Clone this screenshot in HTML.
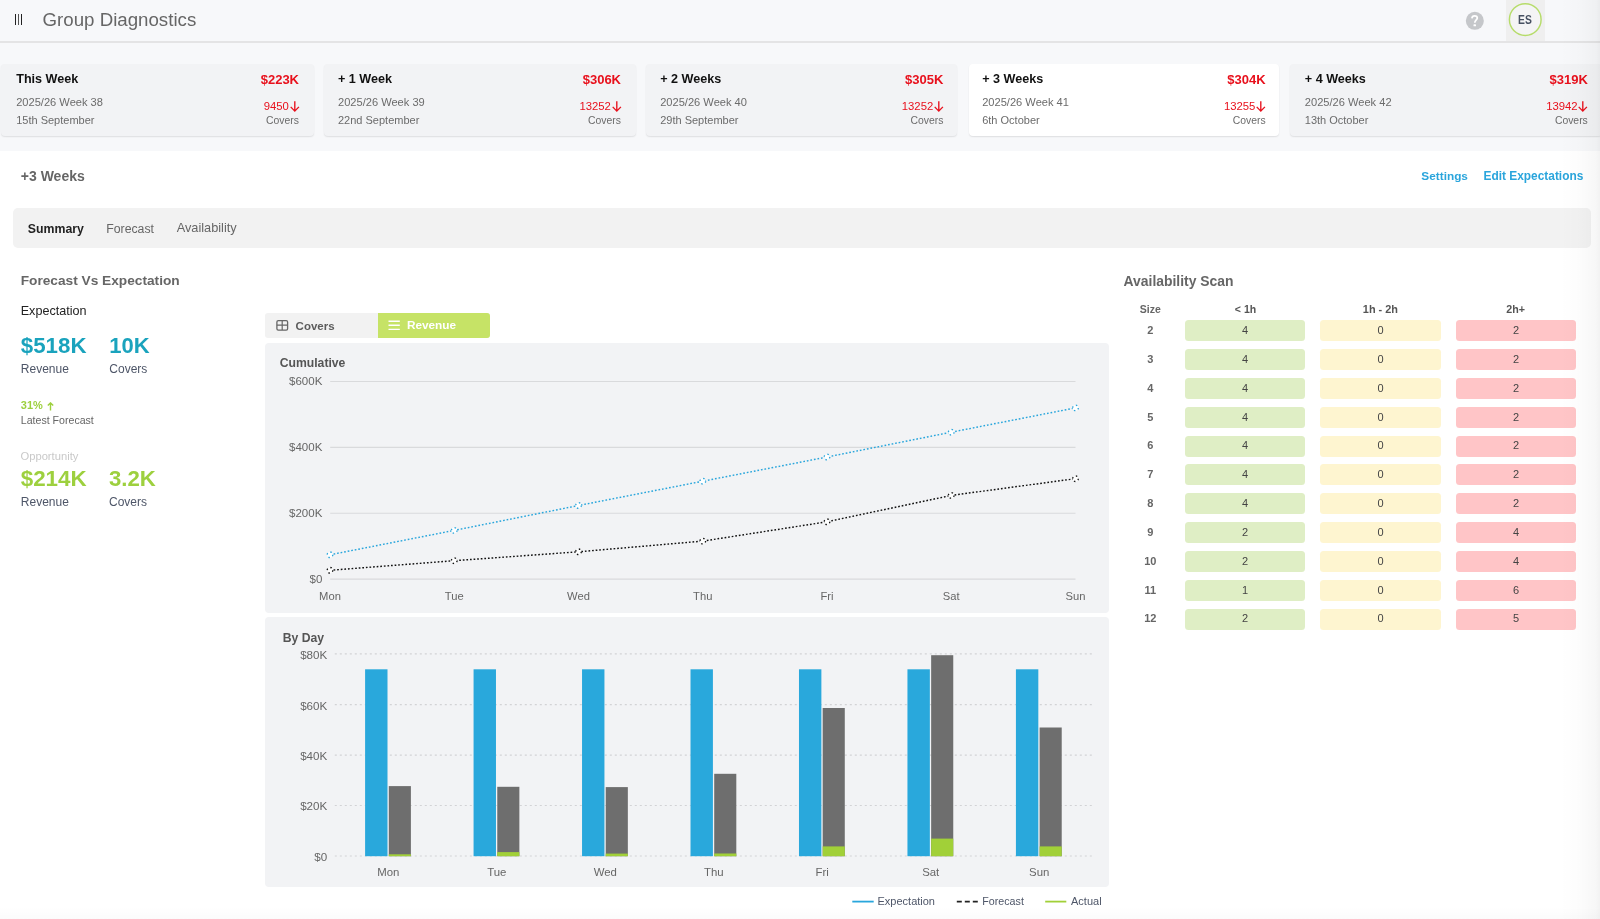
<!DOCTYPE html>
<html><head><meta charset="utf-8"><title>Group Diagnostics</title>
<style>
html,body{margin:0;padding:0;width:1600px;height:919px;overflow:hidden;background:#fff;font-family:"Liberation Sans", sans-serif;}
#root{position:relative;will-change:transform;width:1600px;height:919px;overflow:hidden;}
</style></head><body><div id="root">
<div style="position:absolute;left:0px;top:0px;width:1600px;height:41px;background:#f7f8fa;border-radius:0px;"></div>
<div style="position:absolute;left:0px;top:41px;width:1600px;height:2px;background:#e4e4e5;border-radius:0px;"></div>
<div style="position:absolute;left:14.5px;top:14px;width:1.4px;height:11px;background:#222;border-radius:0px;"></div>
<div style="position:absolute;left:17.5px;top:14px;width:1.4px;height:11px;background:#555;border-radius:0px;"></div>
<div style="position:absolute;left:20.5px;top:14px;width:1.4px;height:11px;background:#222;border-radius:0px;"></div>
<div style="position:absolute;top:10.87px;font-size:18.7px;line-height:18.7px;color:#666;font-weight:400;white-space:nowrap;left:42.5px;">Group Diagnostics</div>
<svg style="position:absolute;left:1465px;top:11px" width="20" height="20" viewBox="0 0 20 20"><circle cx="9.85" cy="9.8" r="9" fill="#c5c7ca"/><path d="M6.9 7.4 C7.0 5.6 8.2 4.8 9.6 4.8 C11.2 4.8 12.3 5.8 12.3 7.0 C12.3 8.8 9.8 9.0 9.8 11.7" stroke="#fff" stroke-width="1.7" fill="none"/><rect x="8.5" y="13.3" width="2.5" height="2.0" rx="0.4" fill="#fff"/></svg>
<div style="position:absolute;left:1505.5px;top:0px;width:39.5px;height:41px;background:#efefef;border-radius:0px;"></div>
<svg style="position:absolute;left:1505px;top:0px" width="40" height="40" viewBox="0 0 40 40"><circle cx="20.25" cy="19.55" r="15.85" fill="#f4f4f5" stroke="#b6dc6a" stroke-width="1.45"/></svg>
<div style="position:absolute;top:14.29px;font-size:12.3px;line-height:12.3px;color:#465061;font-weight:700;white-space:nowrap;transform:scaleX(0.84);left:1375.45px;width:300px;text-align:center;">ES</div>
<div style="position:absolute;left:0px;top:43px;width:1600px;height:107.5px;background:#f7f8fa;border-radius:0px;"></div>
<div style="position:absolute;left:1px;top:64px;width:313.2px;height:72px;background:#f2f3f5;border-radius:4px;box-shadow:0 1px 1.5px rgba(0,0,0,0.10);"></div>
<div style="position:absolute;top:73.13px;font-size:12.6px;line-height:12.6px;color:#111;font-weight:700;white-space:nowrap;left:16.2px;">This Week</div>
<div style="position:absolute;top:72.50px;font-size:13px;line-height:13px;color:#e8101c;font-weight:700;white-space:nowrap;right:1301.00px;">$223K</div>
<div style="position:absolute;top:96.60px;font-size:11.1px;line-height:11.1px;color:#6b6b6b;font-weight:400;white-space:nowrap;left:16.2px;">2025/26 Week 38</div>
<div style="position:absolute;top:114.89px;font-size:11px;line-height:11px;color:#6b6b6b;font-weight:400;white-space:nowrap;left:16.2px;">15th September</div>
<div style="position:absolute;top:101.03px;font-size:11.3px;line-height:11.3px;color:#e8101c;font-weight:400;white-space:nowrap;right:1311.20px;">9450</div>
<svg style="position:absolute;left:289.50px;top:100.5px" width="10" height="12" viewBox="0 0 10 12"><path d="M4.8 0.2 V10.2 M0.7 5.9 L4.8 10.1 L8.9 5.9" stroke="#e8101c" stroke-width="1.35" fill="none"/></svg>
<div style="position:absolute;top:115.60px;font-size:10.4px;line-height:10.4px;color:#6b6b6b;font-weight:400;white-space:nowrap;right:1301.00px;">Covers</div>
<div style="position:absolute;left:323.5px;top:64px;width:312px;height:72px;background:#f2f3f5;border-radius:4px;box-shadow:0 1px 1.5px rgba(0,0,0,0.10);"></div>
<div style="position:absolute;top:73.13px;font-size:12.6px;line-height:12.6px;color:#111;font-weight:700;white-space:nowrap;left:338.0px;">+ 1 Week</div>
<div style="position:absolute;top:72.50px;font-size:13px;line-height:13px;color:#e8101c;font-weight:700;white-space:nowrap;right:979.00px;">$306K</div>
<div style="position:absolute;top:96.60px;font-size:11.1px;line-height:11.1px;color:#6b6b6b;font-weight:400;white-space:nowrap;left:338.0px;">2025/26 Week 39</div>
<div style="position:absolute;top:114.89px;font-size:11px;line-height:11px;color:#6b6b6b;font-weight:400;white-space:nowrap;left:338.0px;">22nd September</div>
<div style="position:absolute;top:101.03px;font-size:11.3px;line-height:11.3px;color:#e8101c;font-weight:400;white-space:nowrap;right:989.20px;">13252</div>
<svg style="position:absolute;left:611.50px;top:100.5px" width="10" height="12" viewBox="0 0 10 12"><path d="M4.8 0.2 V10.2 M0.7 5.9 L4.8 10.1 L8.9 5.9" stroke="#e8101c" stroke-width="1.35" fill="none"/></svg>
<div style="position:absolute;top:115.60px;font-size:10.4px;line-height:10.4px;color:#6b6b6b;font-weight:400;white-space:nowrap;right:979.00px;">Covers</div>
<div style="position:absolute;left:646.2px;top:64px;width:311.2px;height:72px;background:#f2f3f5;border-radius:4px;box-shadow:0 1px 1.5px rgba(0,0,0,0.10);"></div>
<div style="position:absolute;top:73.13px;font-size:12.6px;line-height:12.6px;color:#111;font-weight:700;white-space:nowrap;left:660.2px;">+ 2 Weeks</div>
<div style="position:absolute;top:72.50px;font-size:13px;line-height:13px;color:#e8101c;font-weight:700;white-space:nowrap;right:656.60px;">$305K</div>
<div style="position:absolute;top:96.60px;font-size:11.1px;line-height:11.1px;color:#6b6b6b;font-weight:400;white-space:nowrap;left:660.2px;">2025/26 Week 40</div>
<div style="position:absolute;top:114.89px;font-size:11px;line-height:11px;color:#6b6b6b;font-weight:400;white-space:nowrap;left:660.2px;">29th September</div>
<div style="position:absolute;top:101.03px;font-size:11.3px;line-height:11.3px;color:#e8101c;font-weight:400;white-space:nowrap;right:666.80px;">13252</div>
<svg style="position:absolute;left:933.90px;top:100.5px" width="10" height="12" viewBox="0 0 10 12"><path d="M4.8 0.2 V10.2 M0.7 5.9 L4.8 10.1 L8.9 5.9" stroke="#e8101c" stroke-width="1.35" fill="none"/></svg>
<div style="position:absolute;top:115.60px;font-size:10.4px;line-height:10.4px;color:#6b6b6b;font-weight:400;white-space:nowrap;right:656.60px;">Covers</div>
<div style="position:absolute;left:969.2px;top:64px;width:309.4px;height:72px;background:#ffffff;border-radius:4px;box-shadow:0 1px 1.5px rgba(0,0,0,0.10);"></div>
<div style="position:absolute;top:73.13px;font-size:12.6px;line-height:12.6px;color:#111;font-weight:700;white-space:nowrap;left:982.2px;">+ 3 Weeks</div>
<div style="position:absolute;top:72.50px;font-size:13px;line-height:13px;color:#e8101c;font-weight:700;white-space:nowrap;right:334.40px;">$304K</div>
<div style="position:absolute;top:96.60px;font-size:11.1px;line-height:11.1px;color:#6b6b6b;font-weight:400;white-space:nowrap;left:982.2px;">2025/26 Week 41</div>
<div style="position:absolute;top:114.89px;font-size:11px;line-height:11px;color:#6b6b6b;font-weight:400;white-space:nowrap;left:982.2px;">6th October</div>
<div style="position:absolute;top:101.03px;font-size:11.3px;line-height:11.3px;color:#e8101c;font-weight:400;white-space:nowrap;right:344.60px;">13255</div>
<svg style="position:absolute;left:1256.10px;top:100.5px" width="10" height="12" viewBox="0 0 10 12"><path d="M4.8 0.2 V10.2 M0.7 5.9 L4.8 10.1 L8.9 5.9" stroke="#e8101c" stroke-width="1.35" fill="none"/></svg>
<div style="position:absolute;top:115.60px;font-size:10.4px;line-height:10.4px;color:#6b6b6b;font-weight:400;white-space:nowrap;right:334.40px;">Covers</div>
<div style="position:absolute;left:1290.3px;top:64px;width:312px;height:72px;background:#f2f3f5;border-radius:4px;box-shadow:0 1px 1.5px rgba(0,0,0,0.10);"></div>
<div style="position:absolute;top:73.13px;font-size:12.6px;line-height:12.6px;color:#111;font-weight:700;white-space:nowrap;left:1304.8px;">+ 4 Weeks</div>
<div style="position:absolute;top:72.50px;font-size:13px;line-height:13px;color:#e8101c;font-weight:700;white-space:nowrap;right:12.20px;">$319K</div>
<div style="position:absolute;top:96.60px;font-size:11.1px;line-height:11.1px;color:#6b6b6b;font-weight:400;white-space:nowrap;left:1304.8px;">2025/26 Week 42</div>
<div style="position:absolute;top:114.89px;font-size:11px;line-height:11px;color:#6b6b6b;font-weight:400;white-space:nowrap;left:1304.8px;">13th October</div>
<div style="position:absolute;top:101.03px;font-size:11.3px;line-height:11.3px;color:#e8101c;font-weight:400;white-space:nowrap;right:22.40px;">13942</div>
<svg style="position:absolute;left:1578.30px;top:100.5px" width="10" height="12" viewBox="0 0 10 12"><path d="M4.8 0.2 V10.2 M0.7 5.9 L4.8 10.1 L8.9 5.9" stroke="#e8101c" stroke-width="1.35" fill="none"/></svg>
<div style="position:absolute;top:115.60px;font-size:10.4px;line-height:10.4px;color:#6b6b6b;font-weight:400;white-space:nowrap;right:12.20px;">Covers</div>
<div style="position:absolute;left:0px;top:150.5px;width:1600px;height:768.5px;background:#ffffff;border-radius:0px;"></div>
<div style="position:absolute;top:169.15px;font-size:14px;line-height:14px;color:#666;font-weight:700;white-space:nowrap;left:20.8px;">+3 Weeks</div>
<div style="position:absolute;top:170.71px;font-size:11.8px;line-height:11.8px;color:#2aa5dc;font-weight:700;white-space:nowrap;right:132.10px;">Settings</div>
<div style="position:absolute;top:170.63px;font-size:11.9px;line-height:11.9px;color:#2aa5dc;font-weight:700;white-space:nowrap;right:16.70px;">Edit Expectations</div>
<div style="position:absolute;left:13px;top:208px;width:1577.5px;height:39.5px;background:#f2f2f2;border-radius:5px;"></div>
<div style="position:absolute;top:222.69px;font-size:12.3px;line-height:12.3px;color:#222;font-weight:700;white-space:nowrap;left:27.8px;">Summary</div>
<div style="position:absolute;top:222.59px;font-size:12.3px;line-height:12.3px;color:#666;font-weight:400;white-space:nowrap;left:106.2px;">Forecast</div>
<div style="position:absolute;top:222.31px;font-size:12.75px;line-height:12.75px;color:#666;font-weight:400;white-space:nowrap;left:176.7px;">Availability</div>
<div style="position:absolute;top:274.00px;font-size:13.7px;line-height:13.7px;color:#666;font-weight:700;white-space:nowrap;left:20.7px;">Forecast Vs Expectation</div>
<div style="position:absolute;top:305.13px;font-size:12.6px;line-height:12.6px;color:#222;font-weight:400;white-space:nowrap;left:20.7px;">Expectation</div>
<div style="position:absolute;top:334.92px;font-size:22.3px;line-height:22.3px;color:#1aa3bd;font-weight:700;white-space:nowrap;left:20.8px;">$518K</div>
<div style="position:absolute;top:335.18px;font-size:22px;line-height:22px;color:#1aa3bd;font-weight:700;white-space:nowrap;left:109.3px;">10K</div>
<div style="position:absolute;top:362.64px;font-size:12px;line-height:12px;color:#4e5668;font-weight:400;white-space:nowrap;left:20.8px;">Revenue</div>
<div style="position:absolute;top:362.64px;font-size:12px;line-height:12px;color:#4e5668;font-weight:400;white-space:nowrap;left:109.3px;">Covers</div>
<div style="position:absolute;top:400.19px;font-size:11px;line-height:11px;color:#9dd03e;font-weight:700;white-space:nowrap;left:20.8px;">31%</div>
<svg style="position:absolute;left:47px;top:401.5px" width="7" height="9" viewBox="0 0 7 9"><path d="M3.5 8.5 V1 M0.8 3.6 L3.5 0.9 L6.2 3.6" stroke="#9dd03e" stroke-width="1.4" fill="none"/></svg>
<div style="position:absolute;top:415.33px;font-size:10.6px;line-height:10.6px;color:#666;font-weight:400;white-space:nowrap;left:20.8px;">Latest Forecast</div>
<div style="position:absolute;top:451.02px;font-size:11.2px;line-height:11.2px;color:#c9c9c9;font-weight:400;white-space:nowrap;left:20.5px;">Opportunity</div>
<div style="position:absolute;top:467.54px;font-size:22.4px;line-height:22.4px;color:#9dd03e;font-weight:700;white-space:nowrap;left:20.7px;">$214K</div>
<div style="position:absolute;top:467.71px;font-size:22.2px;line-height:22.2px;color:#9dd03e;font-weight:700;white-space:nowrap;left:109px;">3.2K</div>
<div style="position:absolute;top:495.84px;font-size:12px;line-height:12px;color:#4e5668;font-weight:400;white-space:nowrap;left:20.8px;">Revenue</div>
<div style="position:absolute;top:495.84px;font-size:12px;line-height:12px;color:#4e5668;font-weight:400;white-space:nowrap;left:109px;">Covers</div>
<div style="position:absolute;left:265.3px;top:312.8px;width:225.2px;height:24.8px;background:#f2f2f2;border-radius:3px;"></div>
<div style="position:absolute;left:377.8px;top:312.8px;width:112.6px;height:24.8px;background:#c6e366;border-radius:0 3px 3px 0"></div>
<svg style="position:absolute;left:275px;top:319px" width="15" height="13" viewBox="0 0 15 13"><rect x="1.9" y="1.6" width="10.7" height="9.5" rx="1.4" fill="none" stroke="#666" stroke-width="1.3"/><path d="M7.2 1.6 V11.1 M1.9 6.1 H12.6" stroke="#666" stroke-width="1.2"/></svg>
<div style="position:absolute;top:320.57px;font-size:11.5px;line-height:11.5px;color:#5c5c5c;font-weight:700;white-space:nowrap;left:295.6px;">Covers</div>
<svg style="position:absolute;left:388px;top:320px" width="13" height="11" viewBox="0 0 13 11"><path d="M0.5 1.2 H11.8 M0.5 5.3 H11.8 M0.5 9.4 H11.8" stroke="#fff" stroke-width="1.4"/></svg>
<div style="position:absolute;top:320.01px;font-size:11.8px;line-height:11.8px;color:#fff;font-weight:700;white-space:nowrap;left:406.9px;">Revenue</div>
<div style="position:absolute;left:265.3px;top:343.2px;width:843.5px;height:269.6px;background:#f2f3f5;border-radius:4px;"></div>
<div style="position:absolute;top:357.17px;font-size:12.2px;line-height:12.2px;color:#555;font-weight:700;white-space:nowrap;left:279.7px;">Cumulative</div>
<svg style="position:absolute;left:0;top:0" width="1600" height="919" viewBox="0 0 1600 919"><line x1="330.2" y1="381.5" x2="1075.5" y2="381.5" stroke="#d9dadc" stroke-width="1.1"/><line x1="330.2" y1="447.4" x2="1075.5" y2="447.4" stroke="#d9dadc" stroke-width="1.1"/><line x1="330.2" y1="513.2" x2="1075.5" y2="513.2" stroke="#d9dadc" stroke-width="1.1"/><line x1="330.2" y1="579.1" x2="1075.5" y2="579.1" stroke="#d9dadc" stroke-width="1.1"/></svg>
<div style="position:absolute;top:376.17px;font-size:11.5px;line-height:11.5px;color:#666;font-weight:400;white-space:nowrap;right:1277.70px;">$600K</div>
<div style="position:absolute;top:442.07px;font-size:11.5px;line-height:11.5px;color:#666;font-weight:400;white-space:nowrap;right:1277.70px;">$400K</div>
<div style="position:absolute;top:507.87px;font-size:11.5px;line-height:11.5px;color:#666;font-weight:400;white-space:nowrap;right:1277.70px;">$200K</div>
<div style="position:absolute;top:573.77px;font-size:11.5px;line-height:11.5px;color:#666;font-weight:400;white-space:nowrap;right:1277.70px;">$0</div>
<div style="position:absolute;top:590.82px;font-size:11.2px;line-height:11.2px;color:#666;font-weight:400;white-space:nowrap;left:180.00px;width:300px;text-align:center;">Mon</div>
<div style="position:absolute;top:590.82px;font-size:11.2px;line-height:11.2px;color:#666;font-weight:400;white-space:nowrap;left:304.25px;width:300px;text-align:center;">Tue</div>
<div style="position:absolute;top:590.82px;font-size:11.2px;line-height:11.2px;color:#666;font-weight:400;white-space:nowrap;left:428.50px;width:300px;text-align:center;">Wed</div>
<div style="position:absolute;top:590.82px;font-size:11.2px;line-height:11.2px;color:#666;font-weight:400;white-space:nowrap;left:552.75px;width:300px;text-align:center;">Thu</div>
<div style="position:absolute;top:590.82px;font-size:11.2px;line-height:11.2px;color:#666;font-weight:400;white-space:nowrap;left:677.00px;width:300px;text-align:center;">Fri</div>
<div style="position:absolute;top:590.82px;font-size:11.2px;line-height:11.2px;color:#666;font-weight:400;white-space:nowrap;left:801.25px;width:300px;text-align:center;">Sat</div>
<div style="position:absolute;top:590.82px;font-size:11.2px;line-height:11.2px;color:#666;font-weight:400;white-space:nowrap;left:925.50px;width:300px;text-align:center;">Sun</div>
<svg style="position:absolute;left:0;top:0" width="1600" height="919" viewBox="0 0 1600 919"><polyline points="330.0,554.8 454.2,530.4 578.5,505.5 702.8,481.2 827.0,457.0 951.2,432.2 1075.5,407.9" fill="none" stroke="#29a6dc" stroke-width="1.45" stroke-dasharray="1.7,1.9"/><circle cx="330.0" cy="554.8" r="2.8" fill="#fff" stroke="#29a6dc" stroke-width="1.3" stroke-dasharray="1.5,2.9"/><circle cx="454.2" cy="530.4" r="2.8" fill="#fff" stroke="#29a6dc" stroke-width="1.3" stroke-dasharray="1.5,2.9"/><circle cx="578.5" cy="505.5" r="2.8" fill="#fff" stroke="#29a6dc" stroke-width="1.3" stroke-dasharray="1.5,2.9"/><circle cx="702.8" cy="481.2" r="2.8" fill="#fff" stroke="#29a6dc" stroke-width="1.3" stroke-dasharray="1.5,2.9"/><circle cx="827.0" cy="457.0" r="2.8" fill="#fff" stroke="#29a6dc" stroke-width="1.3" stroke-dasharray="1.5,2.9"/><circle cx="951.2" cy="432.2" r="2.8" fill="#fff" stroke="#29a6dc" stroke-width="1.3" stroke-dasharray="1.5,2.9"/><circle cx="1075.5" cy="407.9" r="2.8" fill="#fff" stroke="#29a6dc" stroke-width="1.3" stroke-dasharray="1.5,2.9"/><polyline points="330.0,570.3 454.2,560.7 578.5,551.8 702.8,541.1 827.0,521.8 951.2,495.4 1075.5,478.7" fill="none" stroke="#111" stroke-width="1.45" stroke-dasharray="1.7,1.9"/><circle cx="330.0" cy="570.3" r="2.8" fill="#fff" stroke="#111" stroke-width="1.3" stroke-dasharray="1.5,2.9"/><circle cx="454.2" cy="560.7" r="2.8" fill="#fff" stroke="#111" stroke-width="1.3" stroke-dasharray="1.5,2.9"/><circle cx="578.5" cy="551.8" r="2.8" fill="#fff" stroke="#111" stroke-width="1.3" stroke-dasharray="1.5,2.9"/><circle cx="702.8" cy="541.1" r="2.8" fill="#fff" stroke="#111" stroke-width="1.3" stroke-dasharray="1.5,2.9"/><circle cx="827.0" cy="521.8" r="2.8" fill="#fff" stroke="#111" stroke-width="1.3" stroke-dasharray="1.5,2.9"/><circle cx="951.2" cy="495.4" r="2.8" fill="#fff" stroke="#111" stroke-width="1.3" stroke-dasharray="1.5,2.9"/><circle cx="1075.5" cy="478.7" r="2.8" fill="#fff" stroke="#111" stroke-width="1.3" stroke-dasharray="1.5,2.9"/></svg>
<div style="position:absolute;left:265.4px;top:617.2px;width:843.3px;height:269.8px;background:#f2f3f5;border-radius:4px;"></div>
<div style="position:absolute;top:631.87px;font-size:12.2px;line-height:12.2px;color:#555;font-weight:700;white-space:nowrap;left:282.7px;">By Day</div>
<svg style="position:absolute;left:0;top:0" width="1600" height="919" viewBox="0 0 1600 919"><line x1="334.8" y1="653.9" x2="1094.6" y2="653.9" stroke="#d2d3d5" stroke-width="1.2" stroke-dasharray="2,3"/><line x1="334.8" y1="704.6" x2="1094.6" y2="704.6" stroke="#d2d3d5" stroke-width="1.2" stroke-dasharray="2,3"/><line x1="334.8" y1="755.1" x2="1094.6" y2="755.1" stroke="#d2d3d5" stroke-width="1.2" stroke-dasharray="2,3"/><line x1="334.8" y1="805.5" x2="1094.6" y2="805.5" stroke="#d2d3d5" stroke-width="1.2" stroke-dasharray="2,3"/><line x1="334.8" y1="856.0" x2="1094.6" y2="856.0" stroke="#d2d3d5" stroke-width="1.2" stroke-dasharray="2,3"/><rect x="365.10" y="669.3" width="22.4" height="186.90" fill="#29a8dc"/><rect x="388.80" y="786.1" width="22.1" height="70.10" fill="#6e6e6e"/><rect x="388.80" y="854.3" width="22.1" height="1.90" fill="#a1d038"/><rect x="473.57" y="669.3" width="22.4" height="186.90" fill="#29a8dc"/><rect x="497.27" y="786.8" width="22.1" height="69.40" fill="#6e6e6e"/><rect x="497.27" y="852.1" width="22.1" height="4.10" fill="#a1d038"/><rect x="582.04" y="669.3" width="22.4" height="186.90" fill="#29a8dc"/><rect x="605.74" y="787.1" width="22.1" height="69.10" fill="#6e6e6e"/><rect x="605.74" y="853.6" width="22.1" height="2.60" fill="#a1d038"/><rect x="690.51" y="669.3" width="22.4" height="186.90" fill="#29a8dc"/><rect x="714.21" y="773.8" width="22.1" height="82.40" fill="#6e6e6e"/><rect x="714.21" y="853.5" width="22.1" height="2.70" fill="#a1d038"/><rect x="798.98" y="669.3" width="22.4" height="186.90" fill="#29a8dc"/><rect x="822.68" y="708.0" width="22.1" height="148.20" fill="#6e6e6e"/><rect x="822.68" y="846.4" width="22.1" height="9.80" fill="#a1d038"/><rect x="907.45" y="669.3" width="22.4" height="186.90" fill="#29a8dc"/><rect x="931.15" y="655.2" width="22.1" height="201.00" fill="#6e6e6e"/><rect x="931.15" y="838.6" width="22.1" height="17.60" fill="#a1d038"/><rect x="1015.92" y="669.3" width="22.4" height="186.90" fill="#29a8dc"/><rect x="1039.62" y="727.5" width="22.1" height="128.70" fill="#6e6e6e"/><rect x="1039.62" y="846.4" width="22.1" height="9.80" fill="#a1d038"/></svg>
<div style="position:absolute;top:648.88px;font-size:11.6px;line-height:11.6px;color:#666;font-weight:400;white-space:nowrap;right:1272.80px;">$80K</div>
<div style="position:absolute;top:699.58px;font-size:11.6px;line-height:11.6px;color:#666;font-weight:400;white-space:nowrap;right:1272.80px;">$60K</div>
<div style="position:absolute;top:750.08px;font-size:11.6px;line-height:11.6px;color:#666;font-weight:400;white-space:nowrap;right:1272.80px;">$40K</div>
<div style="position:absolute;top:800.48px;font-size:11.6px;line-height:11.6px;color:#666;font-weight:400;white-space:nowrap;right:1272.80px;">$20K</div>
<div style="position:absolute;top:850.98px;font-size:11.6px;line-height:11.6px;color:#666;font-weight:400;white-space:nowrap;right:1272.80px;">$0</div>
<div style="position:absolute;top:867.05px;font-size:11.4px;line-height:11.4px;color:#666;font-weight:400;white-space:nowrap;left:238.40px;width:300px;text-align:center;">Mon</div>
<div style="position:absolute;top:867.05px;font-size:11.4px;line-height:11.4px;color:#666;font-weight:400;white-space:nowrap;left:346.87px;width:300px;text-align:center;">Tue</div>
<div style="position:absolute;top:867.05px;font-size:11.4px;line-height:11.4px;color:#666;font-weight:400;white-space:nowrap;left:455.34px;width:300px;text-align:center;">Wed</div>
<div style="position:absolute;top:867.05px;font-size:11.4px;line-height:11.4px;color:#666;font-weight:400;white-space:nowrap;left:563.81px;width:300px;text-align:center;">Thu</div>
<div style="position:absolute;top:867.05px;font-size:11.4px;line-height:11.4px;color:#666;font-weight:400;white-space:nowrap;left:672.28px;width:300px;text-align:center;">Fri</div>
<div style="position:absolute;top:867.05px;font-size:11.4px;line-height:11.4px;color:#666;font-weight:400;white-space:nowrap;left:780.75px;width:300px;text-align:center;">Sat</div>
<div style="position:absolute;top:867.05px;font-size:11.4px;line-height:11.4px;color:#666;font-weight:400;white-space:nowrap;left:889.22px;width:300px;text-align:center;">Sun</div>
<svg style="position:absolute;left:0;top:0" width="1600" height="919" viewBox="0 0 1600 919"><line x1="852.3" y1="901.6" x2="873.7" y2="901.6" stroke="#29a6dc" stroke-width="1.8"/><line x1="956.8" y1="901.6" x2="978.8" y2="901.6" stroke="#222" stroke-width="1.8" stroke-dasharray="5,3"/><line x1="1045.2" y1="901.6" x2="1066.3" y2="901.6" stroke="#a1d038" stroke-width="1.8"/></svg>
<div style="position:absolute;top:896.19px;font-size:11px;line-height:11px;color:#4e5668;font-weight:400;white-space:nowrap;left:877.5px;">Expectation</div>
<div style="position:absolute;top:896.44px;font-size:10.7px;line-height:10.7px;color:#4e5668;font-weight:400;white-space:nowrap;left:982.3px;">Forecast</div>
<div style="position:absolute;top:896.19px;font-size:11px;line-height:11px;color:#4e5668;font-weight:400;white-space:nowrap;left:1071px;">Actual</div>
<div style="position:absolute;top:274.53px;font-size:13.9px;line-height:13.9px;color:#666;font-weight:700;white-space:nowrap;left:1123.6px;">Availability Scan</div>
<div style="position:absolute;top:304.01px;font-size:10.5px;line-height:10.5px;color:#666;font-weight:700;white-space:nowrap;left:1000.30px;width:300px;text-align:center;">Size</div>
<div style="position:absolute;top:304.01px;font-size:10.5px;line-height:10.5px;color:#555;font-weight:700;white-space:nowrap;left:1095.50px;width:300px;text-align:center;">&lt; 1h</div>
<div style="position:absolute;top:303.67px;font-size:10.9px;line-height:10.9px;color:#555;font-weight:700;white-space:nowrap;left:1230.40px;width:300px;text-align:center;">1h - 2h</div>
<div style="position:absolute;top:303.84px;font-size:10.7px;line-height:10.7px;color:#555;font-weight:700;white-space:nowrap;left:1365.60px;width:300px;text-align:center;">2h+</div>
<div style="position:absolute;top:325.09px;font-size:11px;line-height:11px;color:#666;font-weight:700;white-space:nowrap;left:1000.30px;width:300px;text-align:center;">2</div>
<div style="position:absolute;left:1185.0px;top:320.2px;width:120.2px;height:21.1px;background:#dfeec5;border-radius:3.5px;"></div>
<div style="position:absolute;top:325.09px;font-size:11px;line-height:11px;color:#444;font-weight:400;white-space:nowrap;left:1095.10px;width:300px;text-align:center;">4</div>
<div style="position:absolute;left:1320.0px;top:320.2px;width:121.0px;height:21.1px;background:#fef5d0;border-radius:3.5px;"></div>
<div style="position:absolute;top:325.09px;font-size:11px;line-height:11px;color:#444;font-weight:400;white-space:nowrap;left:1230.50px;width:300px;text-align:center;">0</div>
<div style="position:absolute;left:1456.0px;top:320.2px;width:120.2px;height:21.1px;background:#ffc5c7;border-radius:3.5px;"></div>
<div style="position:absolute;top:325.09px;font-size:11px;line-height:11px;color:#444;font-weight:400;white-space:nowrap;left:1366.10px;width:300px;text-align:center;">2</div>
<div style="position:absolute;top:353.92px;font-size:11px;line-height:11px;color:#666;font-weight:700;white-space:nowrap;left:1000.30px;width:300px;text-align:center;">3</div>
<div style="position:absolute;left:1185.0px;top:349.03px;width:120.2px;height:21.1px;background:#dfeec5;border-radius:3.5px;"></div>
<div style="position:absolute;top:353.92px;font-size:11px;line-height:11px;color:#444;font-weight:400;white-space:nowrap;left:1095.10px;width:300px;text-align:center;">4</div>
<div style="position:absolute;left:1320.0px;top:349.03px;width:121.0px;height:21.1px;background:#fef5d0;border-radius:3.5px;"></div>
<div style="position:absolute;top:353.92px;font-size:11px;line-height:11px;color:#444;font-weight:400;white-space:nowrap;left:1230.50px;width:300px;text-align:center;">0</div>
<div style="position:absolute;left:1456.0px;top:349.03px;width:120.2px;height:21.1px;background:#ffc5c7;border-radius:3.5px;"></div>
<div style="position:absolute;top:353.92px;font-size:11px;line-height:11px;color:#444;font-weight:400;white-space:nowrap;left:1366.10px;width:300px;text-align:center;">2</div>
<div style="position:absolute;top:382.75px;font-size:11px;line-height:11px;color:#666;font-weight:700;white-space:nowrap;left:1000.30px;width:300px;text-align:center;">4</div>
<div style="position:absolute;left:1185.0px;top:377.86px;width:120.2px;height:21.1px;background:#dfeec5;border-radius:3.5px;"></div>
<div style="position:absolute;top:382.75px;font-size:11px;line-height:11px;color:#444;font-weight:400;white-space:nowrap;left:1095.10px;width:300px;text-align:center;">4</div>
<div style="position:absolute;left:1320.0px;top:377.86px;width:121.0px;height:21.1px;background:#fef5d0;border-radius:3.5px;"></div>
<div style="position:absolute;top:382.75px;font-size:11px;line-height:11px;color:#444;font-weight:400;white-space:nowrap;left:1230.50px;width:300px;text-align:center;">0</div>
<div style="position:absolute;left:1456.0px;top:377.86px;width:120.2px;height:21.1px;background:#ffc5c7;border-radius:3.5px;"></div>
<div style="position:absolute;top:382.75px;font-size:11px;line-height:11px;color:#444;font-weight:400;white-space:nowrap;left:1366.10px;width:300px;text-align:center;">2</div>
<div style="position:absolute;top:411.58px;font-size:11px;line-height:11px;color:#666;font-weight:700;white-space:nowrap;left:1000.30px;width:300px;text-align:center;">5</div>
<div style="position:absolute;left:1185.0px;top:406.69px;width:120.2px;height:21.1px;background:#dfeec5;border-radius:3.5px;"></div>
<div style="position:absolute;top:411.58px;font-size:11px;line-height:11px;color:#444;font-weight:400;white-space:nowrap;left:1095.10px;width:300px;text-align:center;">4</div>
<div style="position:absolute;left:1320.0px;top:406.69px;width:121.0px;height:21.1px;background:#fef5d0;border-radius:3.5px;"></div>
<div style="position:absolute;top:411.58px;font-size:11px;line-height:11px;color:#444;font-weight:400;white-space:nowrap;left:1230.50px;width:300px;text-align:center;">0</div>
<div style="position:absolute;left:1456.0px;top:406.69px;width:120.2px;height:21.1px;background:#ffc5c7;border-radius:3.5px;"></div>
<div style="position:absolute;top:411.58px;font-size:11px;line-height:11px;color:#444;font-weight:400;white-space:nowrap;left:1366.10px;width:300px;text-align:center;">2</div>
<div style="position:absolute;top:440.41px;font-size:11px;line-height:11px;color:#666;font-weight:700;white-space:nowrap;left:1000.30px;width:300px;text-align:center;">6</div>
<div style="position:absolute;left:1185.0px;top:435.52px;width:120.2px;height:21.1px;background:#dfeec5;border-radius:3.5px;"></div>
<div style="position:absolute;top:440.41px;font-size:11px;line-height:11px;color:#444;font-weight:400;white-space:nowrap;left:1095.10px;width:300px;text-align:center;">4</div>
<div style="position:absolute;left:1320.0px;top:435.52px;width:121.0px;height:21.1px;background:#fef5d0;border-radius:3.5px;"></div>
<div style="position:absolute;top:440.41px;font-size:11px;line-height:11px;color:#444;font-weight:400;white-space:nowrap;left:1230.50px;width:300px;text-align:center;">0</div>
<div style="position:absolute;left:1456.0px;top:435.52px;width:120.2px;height:21.1px;background:#ffc5c7;border-radius:3.5px;"></div>
<div style="position:absolute;top:440.41px;font-size:11px;line-height:11px;color:#444;font-weight:400;white-space:nowrap;left:1366.10px;width:300px;text-align:center;">2</div>
<div style="position:absolute;top:469.24px;font-size:11px;line-height:11px;color:#666;font-weight:700;white-space:nowrap;left:1000.30px;width:300px;text-align:center;">7</div>
<div style="position:absolute;left:1185.0px;top:464.34999999999997px;width:120.2px;height:21.1px;background:#dfeec5;border-radius:3.5px;"></div>
<div style="position:absolute;top:469.24px;font-size:11px;line-height:11px;color:#444;font-weight:400;white-space:nowrap;left:1095.10px;width:300px;text-align:center;">4</div>
<div style="position:absolute;left:1320.0px;top:464.34999999999997px;width:121.0px;height:21.1px;background:#fef5d0;border-radius:3.5px;"></div>
<div style="position:absolute;top:469.24px;font-size:11px;line-height:11px;color:#444;font-weight:400;white-space:nowrap;left:1230.50px;width:300px;text-align:center;">0</div>
<div style="position:absolute;left:1456.0px;top:464.34999999999997px;width:120.2px;height:21.1px;background:#ffc5c7;border-radius:3.5px;"></div>
<div style="position:absolute;top:469.24px;font-size:11px;line-height:11px;color:#444;font-weight:400;white-space:nowrap;left:1366.10px;width:300px;text-align:center;">2</div>
<div style="position:absolute;top:498.07px;font-size:11px;line-height:11px;color:#666;font-weight:700;white-space:nowrap;left:1000.30px;width:300px;text-align:center;">8</div>
<div style="position:absolute;left:1185.0px;top:493.17999999999995px;width:120.2px;height:21.1px;background:#dfeec5;border-radius:3.5px;"></div>
<div style="position:absolute;top:498.07px;font-size:11px;line-height:11px;color:#444;font-weight:400;white-space:nowrap;left:1095.10px;width:300px;text-align:center;">4</div>
<div style="position:absolute;left:1320.0px;top:493.17999999999995px;width:121.0px;height:21.1px;background:#fef5d0;border-radius:3.5px;"></div>
<div style="position:absolute;top:498.07px;font-size:11px;line-height:11px;color:#444;font-weight:400;white-space:nowrap;left:1230.50px;width:300px;text-align:center;">0</div>
<div style="position:absolute;left:1456.0px;top:493.17999999999995px;width:120.2px;height:21.1px;background:#ffc5c7;border-radius:3.5px;"></div>
<div style="position:absolute;top:498.07px;font-size:11px;line-height:11px;color:#444;font-weight:400;white-space:nowrap;left:1366.10px;width:300px;text-align:center;">2</div>
<div style="position:absolute;top:526.90px;font-size:11px;line-height:11px;color:#666;font-weight:700;white-space:nowrap;left:1000.30px;width:300px;text-align:center;">9</div>
<div style="position:absolute;left:1185.0px;top:522.01px;width:120.2px;height:21.1px;background:#dfeec5;border-radius:3.5px;"></div>
<div style="position:absolute;top:526.90px;font-size:11px;line-height:11px;color:#444;font-weight:400;white-space:nowrap;left:1095.10px;width:300px;text-align:center;">2</div>
<div style="position:absolute;left:1320.0px;top:522.01px;width:121.0px;height:21.1px;background:#fef5d0;border-radius:3.5px;"></div>
<div style="position:absolute;top:526.90px;font-size:11px;line-height:11px;color:#444;font-weight:400;white-space:nowrap;left:1230.50px;width:300px;text-align:center;">0</div>
<div style="position:absolute;left:1456.0px;top:522.01px;width:120.2px;height:21.1px;background:#ffc5c7;border-radius:3.5px;"></div>
<div style="position:absolute;top:526.90px;font-size:11px;line-height:11px;color:#444;font-weight:400;white-space:nowrap;left:1366.10px;width:300px;text-align:center;">4</div>
<div style="position:absolute;top:555.73px;font-size:11px;line-height:11px;color:#666;font-weight:700;white-space:nowrap;left:1000.30px;width:300px;text-align:center;">10</div>
<div style="position:absolute;left:1185.0px;top:550.8399999999999px;width:120.2px;height:21.1px;background:#dfeec5;border-radius:3.5px;"></div>
<div style="position:absolute;top:555.73px;font-size:11px;line-height:11px;color:#444;font-weight:400;white-space:nowrap;left:1095.10px;width:300px;text-align:center;">2</div>
<div style="position:absolute;left:1320.0px;top:550.8399999999999px;width:121.0px;height:21.1px;background:#fef5d0;border-radius:3.5px;"></div>
<div style="position:absolute;top:555.73px;font-size:11px;line-height:11px;color:#444;font-weight:400;white-space:nowrap;left:1230.50px;width:300px;text-align:center;">0</div>
<div style="position:absolute;left:1456.0px;top:550.8399999999999px;width:120.2px;height:21.1px;background:#ffc5c7;border-radius:3.5px;"></div>
<div style="position:absolute;top:555.73px;font-size:11px;line-height:11px;color:#444;font-weight:400;white-space:nowrap;left:1366.10px;width:300px;text-align:center;">4</div>
<div style="position:absolute;top:584.56px;font-size:11px;line-height:11px;color:#666;font-weight:700;white-space:nowrap;left:1000.30px;width:300px;text-align:center;">11</div>
<div style="position:absolute;left:1185.0px;top:579.67px;width:120.2px;height:21.1px;background:#dfeec5;border-radius:3.5px;"></div>
<div style="position:absolute;top:584.56px;font-size:11px;line-height:11px;color:#444;font-weight:400;white-space:nowrap;left:1095.10px;width:300px;text-align:center;">1</div>
<div style="position:absolute;left:1320.0px;top:579.67px;width:121.0px;height:21.1px;background:#fef5d0;border-radius:3.5px;"></div>
<div style="position:absolute;top:584.56px;font-size:11px;line-height:11px;color:#444;font-weight:400;white-space:nowrap;left:1230.50px;width:300px;text-align:center;">0</div>
<div style="position:absolute;left:1456.0px;top:579.67px;width:120.2px;height:21.1px;background:#ffc5c7;border-radius:3.5px;"></div>
<div style="position:absolute;top:584.56px;font-size:11px;line-height:11px;color:#444;font-weight:400;white-space:nowrap;left:1366.10px;width:300px;text-align:center;">6</div>
<div style="position:absolute;top:613.39px;font-size:11px;line-height:11px;color:#666;font-weight:700;white-space:nowrap;left:1000.30px;width:300px;text-align:center;">12</div>
<div style="position:absolute;left:1185.0px;top:608.5px;width:120.2px;height:21.1px;background:#dfeec5;border-radius:3.5px;"></div>
<div style="position:absolute;top:613.39px;font-size:11px;line-height:11px;color:#444;font-weight:400;white-space:nowrap;left:1095.10px;width:300px;text-align:center;">2</div>
<div style="position:absolute;left:1320.0px;top:608.5px;width:121.0px;height:21.1px;background:#fef5d0;border-radius:3.5px;"></div>
<div style="position:absolute;top:613.39px;font-size:11px;line-height:11px;color:#444;font-weight:400;white-space:nowrap;left:1230.50px;width:300px;text-align:center;">0</div>
<div style="position:absolute;left:1456.0px;top:608.5px;width:120.2px;height:21.1px;background:#ffc5c7;border-radius:3.5px;"></div>
<div style="position:absolute;top:613.39px;font-size:11px;line-height:11px;color:#444;font-weight:400;white-space:nowrap;left:1366.10px;width:300px;text-align:center;">5</div>
<div style="position:absolute;left:1560px;top:0;width:40px;height:919px;background:linear-gradient(to right, rgba(0,0,0,0) 0%, rgba(0,0,0,0.012) 50%, rgba(0,0,0,0.03) 90%, rgba(0,0,0,0.05) 100%)"></div>
<div style="position:absolute;left:0;top:907px;width:1600px;height:12px;background:linear-gradient(to bottom, rgba(0,0,0,0) 0%, rgba(0,0,0,0.015) 100%)"></div>
</div></body></html>
